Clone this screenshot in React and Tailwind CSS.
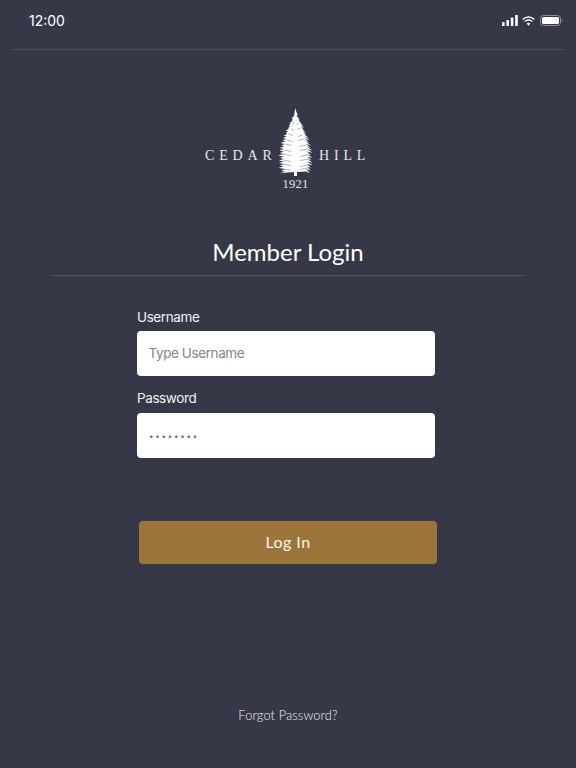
import React from "react";

function Tree() {
  const tiers = 24;
  let left = [], right = [];
  for (let i = 0; i < tiers; i++) {
    const t = (i + 1) / tiers;
    const y = 4 + t * 60;
    const base = Math.pow(Math.sin((Math.PI / 2) * Math.min(1, t / 0.72)), 1.2) * 15.5;
    const w = 0.8 + base * (t > 0.93 ? 0.9 : 1);
    const jitR = [1, -0.8, 0.4, -0.3, 0.9][i % 5];
    const jitL = [-0.5, 0.9, -0.7, 0.6, 0.2][i % 5];
    right.push(`${16.5 + w + jitR},${y + 1}`, `${16.5 + w * 0.72},${y - 0.4}`);
    left.push(`${16.5 - w * 0.72},${y - 0.4}`, `${16.5 - w - jitL},${y + 1}`);
  }
  const pts = ["16.5,0", "17.4,4", ...right, "18,64", "18,68", "15,68", "15,64", ...left.reverse(), "15.6,4"].join(" ");
  const gashes = [14, 20, 26, 31, 36, 41, 46, 51, 56, 60];
  return (
    <svg width="33" height="68" viewBox="0 0 33 68" className="block shrink-0">
      <polygon points={pts} fill="#ffffff" />
      {gashes.map((y, k) => {
        const s = Math.min(13, (y - 4) * 0.32);
        return (
          <g key={y} stroke="#6b6c78" strokeWidth="0.5">
            <line x1={16.5 - s} y1={y + (k % 2)} x2={16.5 - s * 0.35} y2={y + 1.5 + (k % 2)} />
            <line x1={16.5 + s} y1={y + 1 - (k % 2)} x2={16.5 + s * 0.35} y2={y + 2.5 - (k % 2)} />
          </g>
        );
      })}
    </svg>
  );
}

function StatusIcons() {
  return (
    <div className="flex items-center gap-[3px]">
      <svg width="16" height="11" viewBox="0 0 16 11" className="block">
        <rect x="0" y="7" width="2.6" height="4" rx="0.6" fill="#fff" />
        <rect x="4.4" y="5" width="2.6" height="6" rx="0.6" fill="#fff" />
        <rect x="8.8" y="2.5" width="2.6" height="8.5" rx="0.6" fill="#fff" />
        <rect x="13.2" y="0" width="2.6" height="11" rx="0.6" fill="#fff" />
      </svg>
      <svg width="13" height="10" viewBox="0 0 13 10" className="block ml-[1px]">
        <path d="M0.7 3.4a8.2 8.2 0 0 1 11.6 0" fill="none" stroke="#fff" strokeWidth="1.4" />
        <path d="M2.8 5.5a5.2 5.2 0 0 1 7.4 0" fill="none" stroke="#fff" strokeWidth="1.4" />
        <path d="M6.5 9.8 4.7 7.6a2.6 2.6 0 0 1 3.6 0z" fill="#fff" />
      </svg>
      <svg width="23" height="11" viewBox="0 0 23 11" className="block ml-[2px]">
        <rect x="0.5" y="0.5" width="20" height="10" rx="3" fill="none" stroke="#8b8c96" strokeWidth="1" />
        <rect x="2" y="2" width="17" height="7" rx="1.6" fill="#fff" />
        <path d="M21.6 4v3c.6-.2 1-.8 1-1.5s-.4-1.3-1-1.5z" fill="#8b8c96" />
      </svg>
    </div>
  );
}

export default function App() {
  return (
    <div className="w-[576px] h-[768px] bg-[#363847] flex flex-col overflow-hidden font-['Inter',sans-serif] text-white">
      <div className="mx-3 h-[50px] shrink-0 border-b border-[#4f515f] flex items-start justify-between pl-[17px] pr-[1px] pt-[12px]">
        <span className="text-[14px] leading-[18px] text-white">12:00</span>
        <div className="pt-[3px]"><StatusIcons /></div>
      </div>

      <div className="mt-[58px] h-[82px] ml-[205px] flex flex-col items-start shrink-0">
        <div className="flex items-center h-[68px] font-['Liberation_Serif',serif] text-[#e6e6ea] text-[14px] leading-none">
          <span className="w-[68px] mr-[6px] tracking-[0.345em] whitespace-nowrap mt-[28px]">CEDAR</span>
          <Tree />
          <span className="w-[48px] ml-[7px] tracking-[0.345em] whitespace-nowrap mt-[28px]">HILL</span>
        </div>
        <span className="ml-[74px] w-[33px] text-center mt-[1px] font-['Liberation_Serif',serif] text-[#e6e6ea] text-[12.5px] leading-[14px] tracking-[0.02em]">1921</span>
      </div>

      <h1 className="mt-[47px] h-[30px] text-center text-[24px] leading-[30px] font-normal font-['Lato',sans-serif]">Member Login</h1>
      <div className="mx-[52px] mt-[8px] h-px bg-[#565865] shrink-0" />

      <div className="ml-[137px] w-[298px] mt-[33px] flex flex-col">
        <label className="text-[13.5px] tracking-[-0.03em] leading-[17px] h-[22px] text-[#f2f2f4]">Username</label>
        <div className="h-[45px] bg-white rounded-[4px] flex items-center pl-[11.5px] text-[13.5px] tracking-[-0.03em] text-[#85858d]">Type Username</div>
        <label className="mt-[14px] text-[13.5px] tracking-[-0.03em] leading-[17px] h-[23px] text-[#f2f2f4]">Password</label>
        <div className="h-[45px] bg-white rounded-[4px] flex items-center pl-[12px] text-[8px] tracking-[0.22em] text-[#6f6f77]">••••••••</div>
      </div>

      <button className="ml-[139px] mt-[63px] w-[298px] h-[43px] pb-[2px] bg-[#9c753a] rounded-[4px] text-[16px] tracking-[0.03em] text-[#fbf6ec] font-['Lato',sans-serif]">Log In</button>

      <div className="mt-[142px] text-center text-[12.8px] leading-[18px] tracking-[0.01em] font-light text-[#f0f0f3] font-['Lato',sans-serif]">Forgot Password?</div>
    </div>
  );
}
